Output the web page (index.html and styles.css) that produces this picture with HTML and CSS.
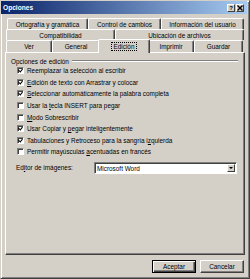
FILE: index.html
```html
<!DOCTYPE html>
<html lang="es">
<head>
    <meta charset="UTF-8">
    <title>Opciones</title>
    <link rel="stylesheet" href="styles.css">
</head>
<body>
    <div class="dialog">
        <div class="titlebar">
            <span class="title">Opciones</span>
            <div class="title-buttons">
                <span class="tbtn">?</span>
                <span class="tbtn">
                    <svg width="6" height="6" viewBox="0 0 6 6"><path d="M0.5 0.5 L5.5 5.5 M5.5 0.5 L0.5 5.5" stroke="#000" stroke-width="1.4"/></svg>
                </span>
            </div>
        </div>

        <div class="body">
            <!-- pestañas en tres filas -->
            <div class="tabs">
                <div class="tab-row row1">
                    <div class="tab">Ortografía y gramática</div>
                    <div class="tab">Control de cambios</div>
                    <div class="tab">Información del usuario</div>
                </div>
                <div class="tab-row row2">
                    <div class="tab">Compatibilidad</div>
                    <div class="tab">Ubicación de archivos</div>
                </div>
                <div class="tab-row row3">
                    <div class="tab">Ver</div>
                    <div class="tab">General</div>
                    <div class="tab selected"><span class="focus">Edición</span></div>
                    <div class="tab">Imprimir</div>
                    <div class="tab">Guardar</div>
                </div>
            </div>

            <div class="panel">
                <div class="group-title">
                    <span>Opciones de edición</span>
                    <span class="rule"></span>
                </div>

                <ul class="checks">
                    <li><span class="box on"></span><span>Reemplazar la selección al escribir</span></li>
                    <li><span class="box on"></span><span><u>E</u>dición de texto con Arrastrar y colocar</span></li>
                    <li><span class="box on"></span><span><u>S</u>eleccionar automáticamente la palabra completa</span></li>
                    <li><span class="box"></span><span>Usar la <u>t</u>ecla INSERT para pegar</span></li>
                    <li><span class="box"></span><span><u>M</u>odo Sobrescribir</span></li>
                    <li><span class="box on"></span><span>Usar Copiar y <u>p</u>egar inteligentemente</span></li>
                    <li><span class="box on"></span><span>Tabulaciones y Retroceso para la sangría i<u>z</u>quierda</span></li>
                    <li><span class="box"></span><span>Permitir mayúsculas <u>a</u>centuadas en francés</span></li>
                </ul>

                <div class="field">
                    <label class="field-label">Ed<u>i</u>tor de imágenes:</label>
                    <div class="select">
                        <span class="select-value">Microsoft Word</span>
                        <span class="select-arrow"><span class="triangle"></span></span>
                    </div>
                </div>
            </div>

            <div class="buttons">
                <button class="btn default">Aceptar</button>
                <button class="btn">Cancelar</button>
            </div>
        </div>
    </div>
</body>
</html>
```

FILE: styles.css
```css
body {
    margin: 0;
    font-family: 'Liberation Sans', Arial, sans-serif;
    font-size: 6.4px;
    color: #000;
    background-color: #d4d0c8;
}

.dialog {
    width: 250px;
    height: 279px;
    box-sizing: border-box;
    border: 1px solid;
    border-color: #d4d0c8 #404040 #404040 #d4d0c8;
    box-shadow: inset 1px 1px #fff, inset -1px -1px #808080;
    background-color: #d4d0c8;
}

/* barra de título */
.titlebar {
    height: 13px;
    margin-right: 2px;
    padding: 0 3px 0 2px;
    display: flex;
    align-items: center;
    justify-content: space-between;
    background: linear-gradient(to right, #0a246a, #a6caf0);
}

.title {
    color: #fff;
    font-weight: bold;
    font-size: 6.6px;
}

.title-buttons {
    display: flex;
    gap: 1px;
}

.tbtn {
    width: 8px;
    height: 8px;
    box-sizing: border-box;
    border: 1px solid;
    border-color: #fff #404040 #404040 #fff;
    background-color: #d4d0c8;
    display: flex;
    align-items: center;
    justify-content: center;
    font-size: 6px;
    font-weight: bold;
    line-height: 1;
}

.body {
    padding: 4px 4px 0 4px;
}

/* pestañas */
.tab-row {
    display: grid;
    height: 11px;
}

.row1 {
    grid-template-columns: 81px 73px 83px;
    margin: 0 1px 0 2px;
}

.row2 {
    grid-template-columns: 109px 129px;
    margin: 0 1px 0 1px;
}

.row3 {
    grid-template-columns: 46px 48px 48px 46px 49px;
    height: 12px;
    margin: 0 2px 0 1px;
}

.tab {
    box-sizing: border-box;
    border: 1px solid;
    border-color: #fff #404040 transparent #fff;
    border-bottom: none;
    border-radius: 2px 2px 0 0;
    box-shadow: inset -1px 0 #808080;
    background-color: #d4d0c8;
    display: flex;
    align-items: center;
    justify-content: center;
    white-space: nowrap;
}

.tab.selected {
    position: relative;
    z-index: 1;
    margin: -1px -2px -1px -2px;
}

.focus {
    outline: 1px dotted #000;
    padding: 0 2px;
}

/* panel */
.panel {
    height: 203px;
    box-sizing: border-box;
    border: 1px solid;
    border-color: #fff #404040 #404040 #fff;
    box-shadow: inset -1px -1px #808080;
    padding: 5px 6px 0 5px;
}

.group-title {
    display: flex;
    align-items: center;
    height: 6px;
    white-space: nowrap;
}

.rule {
    flex: 1;
    margin-left: 3px;
    border-top: 1px solid #808080;
    border-bottom: 1px solid #fff;
}

.checks {
    list-style: none;
    margin: 1px 0 0 0;
    padding: 0 0 0 6px;
}

.checks li {
    height: 11.6px;
    display: flex;
    align-items: center;
    gap: 3px;
    white-space: nowrap;
}

.box {
    width: 7px;
    height: 7px;
    box-sizing: border-box;
    border: 1px solid;
    border-color: #808080 #fff #fff #808080;
    box-shadow: inset 1px 1px #404040;
    background-color: #fff;
    position: relative;
}

.box.on::after {
    content: "";
    position: absolute;
    left: 1px;
    top: 0;
    width: 2px;
    height: 3px;
    border: solid #000;
    border-width: 0 1.3px 1.3px 0;
    transform: rotate(40deg);
}

u {
    text-decoration-thickness: 0.5px;
    text-underline-offset: 1px;
}

.field {
    display: flex;
    align-items: center;
    margin-top: 4px;
    padding-left: 5px;
}

.field-label {
    width: 78px;
}

.select {
    width: 143px;
    height: 12px;
    box-sizing: border-box;
    border: 1px solid;
    border-color: #808080 #fff #fff #808080;
    box-shadow: inset 1px 1px #404040;
    background-color: #fff;
    display: flex;
    align-items: center;
    justify-content: space-between;
    padding: 1px 1px 0 2px;
}

.select-arrow {
    width: 8px;
    height: 8px;
    box-sizing: border-box;
    border: 1px solid;
    border-color: #fff #404040 #404040 #fff;
    background-color: #d4d0c8;
    display: flex;
    align-items: center;
    justify-content: center;
}

.triangle {
    width: 0;
    height: 0;
    border-left: 2px solid transparent;
    border-right: 2px solid transparent;
    border-top: 2px solid #000;
}

/* botones */
.buttons {
    display: flex;
    justify-content: flex-end;
    gap: 4px;
    margin: 5px 1px 0 0;
}

.btn {
    width: 44px;
    height: 13px;
    box-sizing: border-box;
    padding: 0;
    font-family: inherit;
    font-size: 6.4px;
    color: #000;
    background-color: #d4d0c8;
    border: 1px solid;
    border-color: #fff #404040 #404040 #fff;
    box-shadow: inset -1px -1px #808080;
}

.btn.default {
    border-color: #000;
    box-shadow: inset 1px 1px #fff, inset -1px -1px #404040, inset -2px -2px #808080;
}
```
